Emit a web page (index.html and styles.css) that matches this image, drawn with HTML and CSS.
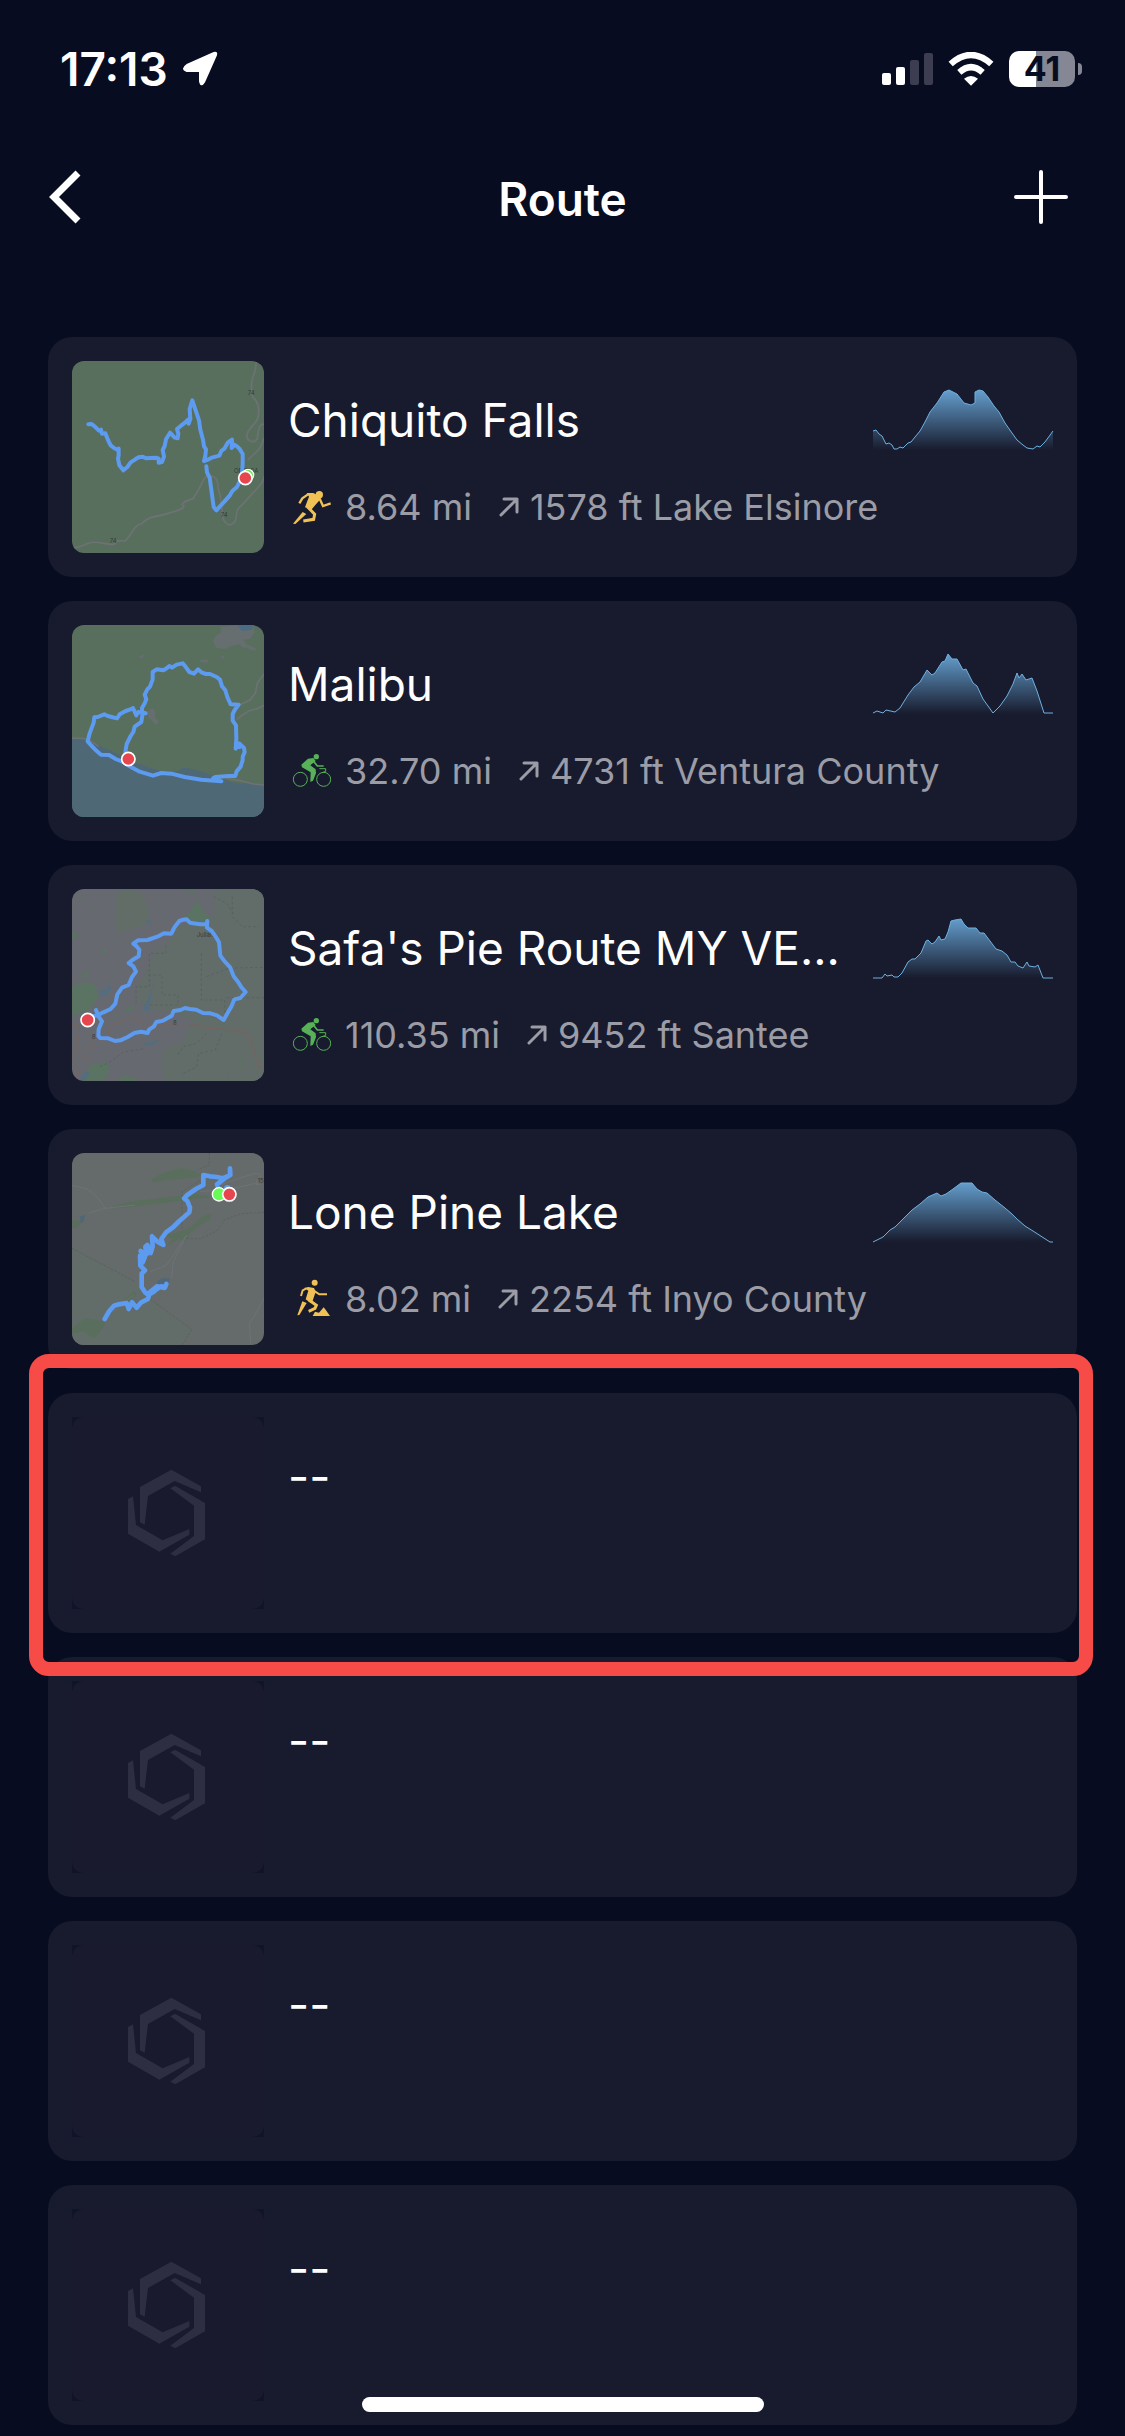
FILE: index.html
```html
<!DOCTYPE html>
<html lang="en">
  <head>
    <meta charset="utf-8">
    <meta name="viewport" content="width=device-width, initial-scale=1">
    <title>Route</title>
    <link rel="stylesheet" href="styles.css">
  </head>
  <body>
    <!-- shared icons -->
    <svg class="defs" aria-hidden="true">
      <defs>
        <linearGradient id="elevation" x1="0" y1="0" x2="0" y2="60" gradientUnits="userSpaceOnUse">
          <stop offset="0" stop-color="#659fce"/>
          <stop offset="1" stop-color="#659fce" stop-opacity="0"/>
        </linearGradient>
      </defs>
      <symbol id="icon-run" viewBox="756 468 120 120">
        <circle cx="838" cy="491" r="11" fill="currentColor"/>
        <path fill="currentColor" d="M800 486h20l16 8 6 10-16 18-12 14-19-7 7-19 5-13z"/>
        <path class="limb" stroke-width="7" d="M778 517l9-15 17-12M838 501l11 24 23-8"/>
        <path class="limb" stroke-width="9" d="M803 528l21 22-3 15-31 5"/>
        <path fill="currentColor" d="M788 543l11 6-33 30-7-1z"/>
      </symbol>
      <symbol id="icon-bike" viewBox="756 465 120 120">
        <circle cx="829" cy="482" r="8" fill="currentColor"/>
        <circle class="limb" cx="781" cy="550" r="21" stroke-width="3"/>
        <circle class="limb" cx="851" cy="550" r="21" stroke-width="3"/>
        <path fill="currentColor" d="M804 488l16-2 7 9-16 13 16 12 1 12-9 22-8 4 1-29-26-15-2-8z"/>
        <path class="limb" stroke-width="5" d="M820 495l12 15h19"/>
        <path class="limb" stroke-width="3" d="M838 518h19v8l-10 4"/>
      </symbol>
      <symbol id="icon-hike" viewBox="756 462 120 120">
        <circle cx="824" cy="473" r="9" fill="currentColor"/>
        <path fill="currentColor" d="M792 489l13-3 17 3 5 11-9 27-6 7-15-11 8-26z"/>
        <path class="limb" stroke-width="6" d="M783 513l5-17 10-5M821 497l17 11h23"/>
        <path class="limb" stroke-width="9" d="M807 525l22 16-4 9-19 9"/>
        <path fill="currentColor" d="M787 529l13 5-22 36-6 1z"/>
        <path fill="currentColor" d="M818 573l7-13 12 3 14-16 7 9 12 17z"/>
      </symbol>
      <symbol id="icon-ascent" viewBox="0 0 20 20">
        <path class="limb" stroke-width="3" stroke-linecap="round" stroke-linejoin="round" d="M2 18L18 2M5 2h13v13"/>
      </symbol>
      <symbol id="logo" viewBox="156 201 576 576">
        <rect x="156" y="201" width="576" height="576" rx="36" fill="#191a2e"/>
        <path fill="#2d2e42" d="M454 359l89 50v18l-79-34-80 45-10 86-14-7V411z"/>
        <path fill="#2d2e42" d="M465 407l90 52v109l-89 51-15-8 71-53v-91l-71-52z"/>
        <path fill="#2d2e42" d="M339 439l9 86 80 46 80-34v17l-90 51-94-54V447z"/>
      </symbol>
    </svg>

    <div class="status-bar">
      <div class="status-left">
        <span class="clock">17:13</span>
        <svg class="location" viewBox="0 0 36 36">
          <path d="M4 14L31 2q3-1 2 2L21 31q-3 5-4-1V20H4q-6-2 0-6z" fill="#fff" stroke="#fff" stroke-width="2" stroke-linejoin="round"/>
        </svg>
      </div>
      <div class="status-right">
        <svg class="signal" viewBox="0 0 51 32">
          <rect x="0" y="20" width="9" height="12" rx="2" fill="#fff"/>
          <rect x="14" y="14" width="9" height="18" rx="2" fill="#fff"/>
          <rect x="28" y="7" width="9" height="25" rx="2" fill="#3c3d50"/>
          <rect x="42" y="0" width="9" height="32" rx="2" fill="#3c3d50"/>
        </svg>
        <svg class="wifi" viewBox="0 0 138 102">
          <path d="M8 36Q69-18 130 36" fill="none" stroke="#fff" stroke-width="19"/>
          <path d="M34 61Q69 30 104 61" fill="none" stroke="#fff" stroke-width="19"/>
          <path d="M48 80Q69 64 90 80L69 101z" fill="#fff"/>
        </svg>
        <div class="battery"><span>41</span></div>
      </div>
    </div>

    <header class="nav-bar">
      <button class="nav-button back" type="button" aria-label="Back">
        <svg viewBox="0 0 34 54"><path d="M30 3L6 27l24 24" fill="none" stroke="#fff" stroke-width="7"/></svg>
      </button>
      <h1>Route</h1>
      <button class="nav-button add" type="button" aria-label="Add route">
        <svg viewBox="0 0 54 54"><path d="M27 2v50M2 27h50" fill="none" stroke="#fff" stroke-width="4" stroke-linecap="round"/></svg>
      </button>
    </header>

    <ul class="route-list">
      <li class="route-card">
        <svg class="thumb" viewBox="96 90 576 576">
          <rect x="96" y="90" width="576" height="576" fill="#596f5e"/>
          <path class="road" d="M649 90q-2 30-9 45t-5 45q-2 15 7 22t14 30q2 30-10 42t-22 28q-9 20 5 27t23-5q2-30 8-38t14-6M672 320q-8 30-22 42t-27 25M96 652q30-6 45-14t50-1 35-1 30-6q10-10 22-30t26-21q16-17 40-22t60-16 25-18 30-20q12-17 25-43 9-28 30-25t20 35q12 40 12 72t22 40q20-3 21-27t14-30l55-60q16-20 20-48"/>
          <text x="623" y="192">74</text>
          <text x="542" y="557">74</text>
          <text x="209" y="637">74</text>
          <text x="582" y="425">ORTEGA</text>
          <path class="track" d="M145 280l10-1 12 10 10 10 6-3 3 12 10-1 8 20 8 16 10 8 10 5 4-3v20l-2 10 4 20 12 15 12-10 10-14 14-9 10-6 12-2 10 5 30-2 8 3v12l10-2 6-16-4-20 6-12 4-20 12-20 14 15 9 2 2-14-4-14 12-10 12-9 9-9 2 12 5-14-2-30 8-26 10 30 10 30 4 28 8 30 3 20 6 9-2 20-4 15 14-5 12-6 20-5 6-14 10-8 10-18 12-8-1 25 8-10 8 5 8 8 9 15v30l-3 40-14 29-14 12-8 14-16 18-16 17-8 9-8-10-3-22-4-30-5-36-8-16-2-18"/>
          <circle cx="624" cy="432" r="17" fill="#62e650" stroke="#fff" stroke-width="4"/>
          <circle cx="616" cy="441" r="20" fill="#e8464f" stroke="#fff" stroke-width="5"/>
        </svg>
        <div class="info">
          <h2>Chiquito Falls</h2>
          <p class="meta">
            <svg class="sport run"><use href="#icon-run"/></svg>
            <span class="distance">8.64 mi</span>
            <svg class="ascent"><use href="#icon-ascent"/></svg>
            <span>1578 ft Lake Elsinore</span>
          </p>
        </div>
        <svg class="profile" viewBox="0 0 180 60">
          <path class="area" d="M0 60V41L3 40 6 44 9 46 13 54 16 53 19 55 21 59H24L27 57 30 58 35 53 38 52 42 47 47 41 52 32 57 22 64 13 71 2 76 0 80 2 84 4 91 13 98 15 102 13V2L106 0 110 1 115 7 121 16 126 22 132 33 139 43 144 50 150 55 154 58 160 59 164 56 167 57 172 52 180 41V60z"/>
          <path class="line" d="M0 41L3 40 6 44 9 46 13 54 16 53 19 55 21 59H24L27 57 30 58 35 53 38 52 42 47 47 41 52 32 57 22 64 13 71 2 76 0 80 2 84 4 91 13 98 15 102 13V2L106 0 110 1 115 7 121 16 126 22 132 33 139 43 144 50 150 55 154 58 160 59 164 56 167 57 172 52 180 41"/>
        </svg>
      </li>

      <li class="route-card">
        <svg class="thumb" viewBox="96 87 576 576">
          <rect x="96" y="87" width="576" height="576" fill="#596f5e"/>
          <path d="M96 428q40-3 60 8l30 16q50 22 90 42t86 30 60-4 100 20 100 18l50 10v95H96z" fill="#4e6876"/>
          <path d="M540 93l50-6h50l3 22-13 20-20 2 12 18-8 8-18-12-22 6-20 8-26-4-9-20 8-15 18-12z" fill="#666e70"/>
          <path d="M592 87h48l-4 14-30 4z" fill="#4c6c83"/>
          <path d="M325 345l12-10 10 14-4 12 14 18-10 8-12-14-10-8zM620 145l28 12-4 7-24-8zM480 192l26-2-4 10-20-2zM540 178l14 4-6 8zM296 182l18-8-8 14z" fill="#666e70"/>
          <path class="road" stroke-width="3" d="M672 235l-12 15-8 12-6 30-16 20-30 14M672 328l-20 10-24 6-22 14-16 12"/>
          <path class="road" d="M96 427q38-3 56 8l24 16M560 548l40 6 40 10 32 3"/>
          <path class="track" d="M262 480l-6-12 4-24 12-24 8-12 4-16 20-14 3-20-1-22 8-14 5-12-5-14 8-16 8-8 8-22v-22l12-8 20 3 10-6 8-7 8 5 14-9 18-4 10 12 10 14 14 5 12-13 12 10 12 4h12l20 9 10 8 6 20 10 12 6 20 10 22 24 1-12 16-6 12v20l10 14 1 40-2 30 10-16 15 14 2 12-6 14v10l-6 20-12 14-4 14h-20l-40 3-6 3 24 10-60-5-50-8-40-10-30-2-25 8-40-12-30-16-22-14-20-8-20-12-24-1-12-10-16-16-12-14 6-24 12-32 2-16 10-1 20-8 10 5 12 3 16 4 8-12 18-10 12-4 10-5 10 22 6-10 22 4"/>
          <circle cx="596" cy="449" r="10" fill="#5c9bf0"/>
          <circle cx="265" cy="489" r="20" fill="#e8464f" stroke="#fff" stroke-width="5"/>
        </svg>
        <div class="info">
          <h2>Malibu</h2>
          <p class="meta">
            <svg class="sport bike"><use href="#icon-bike"/></svg>
            <span class="distance">32.70 mi</span>
            <svg class="ascent"><use href="#icon-ascent"/></svg>
            <span>4731 ft Ventura County</span>
          </p>
        </div>
        <svg class="profile" viewBox="0 0 180 60">
          <path class="area" d="M0 59L4 57 10 59 13 56 22 58 27 54 35 41 41 33 47 28 54 16 59 21 62 19 69 8 72 7 75 0 79 5H84L90 16 93 15 100 29 104 32 110 45 120 59 127 52 134 42 140 30 144 19 146 24 149 20 153 26 156 25 159 24 164 37 171 59H180V60H0z"/>
          <path class="line" d="M0 59L4 57 10 59 13 56 22 58 27 54 35 41 41 33 47 28 54 16 59 21 62 19 69 8 72 7 75 0 79 5H84L90 16 93 15 100 29 104 32 110 45 120 59 127 52 134 42 140 30 144 19 146 24 149 20 153 26 156 25 159 24 164 37 171 59H180"/>
        </svg>
      </li>

      <li class="route-card">
        <svg class="thumb" viewBox="96 87 576 576">
          <rect x="96" y="87" width="576" height="576" fill="#666a70"/>
          <path d="M520 87h152v576H370l-4-90 60-30 30-60-40-20-90-20-35-20V380l30-50 25-60 40-20 20-50 60-10 60-30z" fill="#626c69"/>
          <path d="M230 100l30-13 40 10 25 40v50l-40 20-60 12 4-60z" fill="#636d68"/>
          <path d="M96 380q30-18 55-12t20 50l-20 30-55 20zM432 180l20-30 22-30 18 38 18 10-20 20zM96 216l22 8-16 14-6-3zM112 118l22-6-18 12zM124 340l22-4-2 16-20 2zM180 270l24-6-4 14zM150 615l50-10 10 30-20 27h-60zM240 655l20-10 30 12v6h-50zM595 585l14 20-8 12zM436 90l24 0 4 12zM250 450l30-14 8 8-30 12zM215 460l20 6-4 8z" fill="#5b7362"/>
          <path d="M176 390l14 4 20-18 4 8-18 24-14-6zM342 368l-10 30-2 34-14 6M316 434l14 10-6 10-14-8zM318 182l14 0-4 12zM312 552l44-12-20 16zM120 655l20-20 8 4-14 20zM424 640l10 20M560 645l8 10" fill="#536e80" stroke="#536e80" stroke-width="2"/>
          <path d="M484 280v140h70v60M288 430v-50h40v-100h50v-28M577 110v60l30 30h50M500 350l70-26 100-2M560 413h112M330 435h84v-30h-48v-60h-40M430 640l40-20 6-40 50-10 20-50M520 110l40 20 20 30M500 520l-30 30-40 10-20 30M180 620l30-14 40-30 60-10" fill="none" stroke="#555d5c" stroke-width="2" stroke-dasharray="8 7"/>
          <path d="M96 492h22l-2 60-18 12M98 590l20-20 40-4 2-30 45-4 5-30q30-20 60-26t40 14l40 4 90 2 30-3 30 12 90 5q40 8 46 38t20 74l52-10M105 590q4 40 6 73M118 590q20 10 45 8" fill="none" stroke="#746562" stroke-width="4"/>
          <text x="155" y="536">8</text>
          <text x="399" y="496">8</text>
          <text x="470" y="230">Julian</text>
          <path class="track" d="M145 468l25-1 20-10 22-10 14-16 6-28 14-20 20-8 10-24 12-16-8-16-14-10 10-8 20-12 2-20-8-10-10-8 14-10 28-1 30-10 20-10 22 1 10-20 14-18 12-4 10-1 10 10 10 2 20 3 20-1 2-9-1 20 14 10 14 20 8 14 4 40 12 16 18 20 10 26 14 18 10 16 12 13-16 18-18 4-8 20-14 24-10 18-20-14-20-6-22-1-20-10-20-2-14-3-14 6-20 3-6 14-24 14-10 3-12 2-8 14-14 9-4 10-20-4-20 4-20 12-22 10-16 2-20-8-24-1-6-6 1-20 10-24-10-14-8-20"/>
          <circle cx="143" cy="480" r="20" fill="#e8464f" stroke="#fff" stroke-width="5"/>
        </svg>
        <div class="info">
          <h2>Safa's Pie Route MY VE...</h2>
          <p class="meta">
            <svg class="sport bike"><use href="#icon-bike"/></svg>
            <span class="distance">110.35 mi</span>
            <svg class="ascent"><use href="#icon-ascent"/></svg>
            <span>9452 ft Santee</span>
          </p>
        </div>
        <svg class="profile" viewBox="0 0 180 60">
          <path class="area" d="M0 60H9L12 56 14 58 19 57 21 59H25L29 55 35 44 39 41H42L48 35 53 23 55 22 59 26 62 24 66 18 68 22 72 21 75 14 78 3 82 2 88 1 91 6 95 10 103 10 107 15H111L117 23 123 31 129 33 134 37 138 44H142L145 48 150 50 154 44 156 48 162 49 165 47 170 60z"/>
          <path class="line" d="M0 60H9L12 56 14 58 19 57 21 59H25L29 55 35 44 39 41H42L48 35 53 23 55 22 59 26 62 24 66 18 68 22 72 21 75 14 78 3 82 2 88 1 91 6 95 10 103 10 107 15H111L117 23 123 31 129 33 134 37 138 44H142L145 48 150 50 154 44 156 48 162 49 165 47 170 60H180"/>
        </svg>
      </li>

      <li class="route-card">
        <svg class="thumb" viewBox="96 84 576 576">
          <rect x="96" y="84" width="576" height="576" fill="#656b6a"/>
          <path d="M96 370l190 100 36 46 134 98-30 46H96z" fill="#626c68"/>
          <path d="M335 162l40-20 50-12 30 6 32 14-20 8-50 4-40 4-20 4-18 2zM200 248l80-20 60-6 120-16 60 10-60 6-100 14-60 6-60 8zM485 275l28-10-4 20-30 16-30 24-14 28-16-12-40 22 20-20-20-14 30-6 40-14zM96 610l40-30 30 4 30 8-10 20-20 26-20-6-14-14-36 8zM96 288l36-2-20 22-16 2zM280 500l10 6-30 30-14-2z" fill="#5a6e5d"/>
          <path d="M352 468l18-10 20 4-6 20-30 4zM120 275l16-6-4 20-10 4z" fill="#4f6778"/>
          <path d="M96 370l190 100M330 522l126 92-30 46M508 84v36l-36 14M440 340l40 2 50-24 24-34 50-18 68-4M490 160l-64 40v110" fill="none" stroke="#565d5c" stroke-width="2" stroke-dasharray="7 5"/>
          <path d="M96 182q40 4 60 20t40 48l-50 14M196 250l90-10M480 200l100-10 90-20M540 180l100-34q30-2 18 12t-10 20h14M440 330l-40 80-5 50M440 330l-60 90-50 20M280 510l-60 50M672 520l-30 55-14 20 4 60" fill="none" stroke="#6f7178" stroke-width="3"/>
          <text x="653" y="174">15</text>
          <path class="track track-wide" d="M535 190l-4-12 26-20 14-8-1-20v20l-22 10-18-4-20-2-20-4v30l-22 12-26 18-10 10 10 8 8 20-2 14-16 14-14 12-18 18-22 16-14 20 6 18-18-10-16-16 2 30-6 20-10-24-6 6 4 22-18-10 12 20-6 14-8-20 1 30 14 14-10 10v40l10 16 10 8 16-10 10-8 12-8 12 3 4-10-6 12-22-5-22 18-5 20-20 10-14 16-14-16-10 20-6-18-24 4-14 4-14 16-14 24"/>
          <circle cx="562" cy="190" r="10" fill="#5c9bf0"/>
          <circle cx="537" cy="208" r="20" fill="#66fb55" stroke="#fff" stroke-width="4"/>
          <circle cx="568" cy="208" r="20" fill="#e8464f" stroke="#fff" stroke-width="5"/>
        </svg>
        <div class="info">
          <h2>Lone Pine Lake</h2>
          <p class="meta">
            <svg class="sport run"><use href="#icon-hike"/></svg>
            <span class="distance">8.02 mi</span>
            <svg class="ascent"><use href="#icon-ascent"/></svg>
            <span>2254 ft Inyo County</span>
          </p>
        </div>
        <svg class="profile" viewBox="0 0 180 60">
          <path class="area" d="M0 60L10 55 17 48 22 45 29 38 39 28 47 22 55 15 64 11 68 14 73 12 80 7 88 1H99L104 7 109 10 114 11 122 18 132 26 139 32 144 37 152 44 160 49 177 60z"/>
          <path class="line" d="M0 60L10 55 17 48 22 45 29 38 39 28 47 22 55 15 64 11 68 14 73 12 80 7 88 1H99L104 7 109 10 114 11 122 18 132 26 139 32 144 37 152 44 160 49 177 60H180"/>
        </svg>
      </li>

      <!-- routes that are still loading -->
      <li class="route-card highlighted">
        <svg class="thumb empty"><use href="#logo"/></svg>
        <div class="info"><h2>--</h2></div>
      </li>
      <li class="route-card">
        <svg class="thumb empty"><use href="#logo"/></svg>
        <div class="info"><h2>--</h2></div>
      </li>
      <li class="route-card">
        <svg class="thumb empty"><use href="#logo"/></svg>
        <div class="info"><h2>--</h2></div>
      </li>
      <li class="route-card">
        <svg class="thumb empty"><use href="#logo"/></svg>
        <div class="info"><h2>--</h2></div>
      </li>
    </ul>

    <div class="home-indicator"></div>
  </body>
</html>
```

FILE: styles.css
```css
* {
  box-sizing: border-box;
}
body {
  margin: 0;
  background: #070c20;
  color: #fff;
  font-family: Inter, Roboto, "Liberation Sans", sans-serif;
}
h1, h2, p, ul {
  margin: 0;
  padding: 0;
}
svg {
  display: block;
  flex: none;
}
.defs {
  position: absolute;
  width: 0;
  height: 0;
}

/* status bar */
.status-bar {
  display: flex;
  justify-content: space-between;
  align-items: center;
  height: 138px;
  padding: 0 43px 0 60px;
}
.status-left, .status-right {
  display: flex;
  align-items: center;
  gap: 15px;
}
.clock {
  font-size: 46px;
  font-weight: 600;
}
.location {
  width: 36px;
  height: 36px;
}
.signal {
  width: 51px;
  height: 32px;
}
.wifi {
  width: 46px;
  height: 34px;
}
.battery {
  position: relative;
  width: 66px;
  height: 36px;
  margin-right: 7px;
  border-radius: 10px;
  background: linear-gradient(to right, #fff 41%, #868794 41%);
  color: #070c20;
  font-size: 34px;
  font-weight: 700;
  line-height: 36px;
  text-align: center;
}
.battery::after {
  content: "";
  position: absolute;
  top: 12px;
  right: -7px;
  width: 4px;
  height: 12px;
  border-radius: 0 4px 4px 0;
  background: #868794;
}

/* title bar */
.nav-bar {
  display: flex;
  justify-content: space-between;
  align-items: center;
  height: 118px;
  padding: 0 48px;
}
.nav-bar h1 {
  padding-top: 4px;
  font-size: 46px;
  font-weight: 600;
}
.nav-button {
  display: flex;
  align-items: center;
  width: 72px;
  height: 72px;
  padding: 0;
  border: none;
  background: none;
  cursor: pointer;
}
.back svg {
  width: 34px;
  height: 54px;
}
.add {
  justify-content: center;
}
.add svg {
  width: 54px;
  height: 54px;
}

/* routes */
.route-list {
  display: flex;
  flex-direction: column;
  gap: 24px;
  padding: 81px 48px 11px;
  list-style: none;
}
.route-card {
  position: relative;
  display: flex;
  gap: 24px;
  padding: 24px;
  border-radius: 24px;
  background: #171b2d;
}
.thumb {
  width: 192px;
  height: 192px;
  border-radius: 12px;
}
.thumb.empty {
  border-radius: 0;
  background: #10142a;
}
.thumb text {
  fill: #343a3c;
  font-size: 18px;
}
.road {
  fill: none;
  stroke: #6d7274;
  stroke-width: 5px;
}
.track {
  fill: none;
  stroke: #5c9bf0;
  stroke-width: 12px;
  stroke-linecap: round;
  stroke-linejoin: round;
}
.track-wide {
  stroke-width: 14px;
}
.info {
  flex: 1;
  min-width: 0;
  padding-top: 29px;
}
.info h2 {
  overflow: hidden;
  font-size: 46px;
  font-weight: 400;
  line-height: 60px;
  white-space: nowrap;
  text-overflow: ellipsis;
}
.meta {
  display: flex;
  align-items: center;
  margin-top: 33px;
  color: #9b9ca6;
  font-size: 36px;
  line-height: 48px;
  white-space: nowrap;
}
.sport {
  width: 40px;
  height: 40px;
  margin: 0 13px 0 4px;
}
.run {
  color: #f0c154;
}
.bike {
  color: #58b058;
}
.limb {
  fill: none;
  stroke: currentColor;
}
.distance {
  margin-right: 27px;
}
.ascent {
  width: 20px;
  height: 20px;
  margin-right: 11px;
}
.profile {
  position: absolute;
  top: 53px;
  right: 24px;
  width: 180px;
  height: 60px;
  overflow: visible;
}
.area {
  fill: url(#elevation);
}
.line {
  fill: none;
  stroke: #6fb0e2;
  stroke-width: 1px;
}

/* frame drawn round the first empty card */
.highlighted::after {
  content: "";
  position: absolute;
  z-index: 1;
  top: -39px;
  right: -16px;
  bottom: -43px;
  left: -19px;
  border: 14px solid #f74b47;
  border-radius: 20px;
}

.home-indicator {
  position: fixed;
  z-index: 2;
  bottom: 24px;
  left: 50%;
  width: 402px;
  height: 15px;
  margin-left: -201px;
  border-radius: 8px;
  background: #fff;
}
```
